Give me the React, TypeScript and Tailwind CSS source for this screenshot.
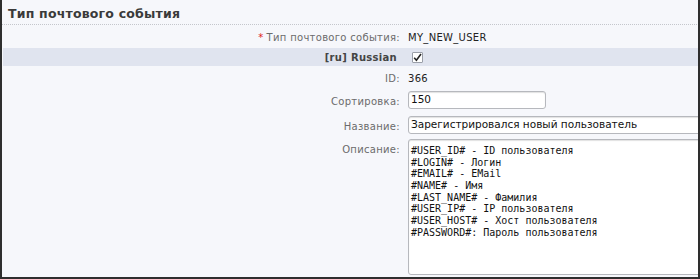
import React from "react";

const descLines = [
  "#USER_ID# - ID пользователя",
  "#LOGIN# - Логин",
  "#EMAIL# - EMail",
  "#NAME# - Имя",
  "#LAST_NAME# - Фамилия",
  "#USER_IP# - IP пользователя",
  "#USER_HOST# - Хост пользователя",
  "#PASSWORD#: Пароль пользователя",
];

function Label({ children }: { children: React.ReactNode }) {
  return (
    <div className="w-[399px] shrink-0 pr-[1px] text-right text-[10px] text-[#6b6b6b] tracking-[0.3px]">
      {children}
    </div>
  );
}

export default function App() {
  return (
    <div
      className="w-[700px] h-[279px] overflow-hidden bg-[#f6f7fb] border-l-2 border-r-2 border-b-2 border-[#2e2e2e]"
      style={{ fontFamily: '"DejaVu Sans", Verdana, sans-serif' }}
    >
      {/* Header */}
      <div className="h-[25px] pl-[6px] pt-[1px] mr-[1px] border-b border-dotted border-[#c4c6cc]">
        <span className="text-[12.5px] font-bold text-[#3a3a3a] tracking-[0.2px]">
          Тип почтового события
        </span>
      </div>

      {/* Event type */}
      <div className="h-[23px] flex items-center pt-[1px]">
        <Label>
          <span className="text-[#e02020] mr-[3px]">*</span>Тип почтового события:
        </Label>
        <div className="pl-[7px] text-[10px] text-[#222] tracking-[0.3px]">MY_NEW_USER</div>
      </div>

      {/* Language bar */}
      <div className="h-[18px] ml-px flex items-center bg-[#e0e4ef]">
        <div className="w-[394px] shrink-0 text-right text-[10px] font-bold text-[#444] tracking-[0.3px]">
          [ru] Russian
        </div>
        <div className="ml-[15px] w-[11px] h-[11px] border border-[#9a9ea8] bg-white rounded-[1px] flex items-center justify-center">
          <svg width="9" height="9" viewBox="0 0 9 9" fill="none">
            <path d="M1.2 4.8l2.2 2.4L8 1" stroke="#222" strokeWidth="1.6" />
          </svg>
        </div>
      </div>

      {/* ID */}
      <div className="h-[25px] flex items-center">
        <Label>ID:</Label>
        <div className="pl-[7px] text-[10px] text-[#222] tracking-[0.3px]">366</div>
      </div>

      {/* Sort */}
      <div className="h-[25px] flex items-start">
        <div className="pt-[3px]">
          <Label>Сортировка:</Label>
        </div>
        <div className="ml-[7px] w-[138px] h-[18px] bg-white border border-[#b6b8bd] rounded-[3px] shadow-[inset_0_1px_1px_rgba(0,0,0,0.12)] flex items-center pl-[2px] text-[10.5px] text-[#111]">
          150
        </div>
      </div>

      {/* Name */}
      <div className="h-[23px] flex items-start">
        <div className="pt-[3px]">
          <Label>Название:</Label>
        </div>
        <div className="ml-[7px] w-[320px] shrink-0 h-[18px] bg-white border border-[#b6b8bd] rounded-[3px] shadow-[inset_0_1px_1px_rgba(0,0,0,0.12)] flex items-center pl-[2px] text-[10.5px] text-[#111] whitespace-nowrap">
          Зарегистрировался новый пользователь
        </div>
      </div>

      {/* Description */}
      <div className="flex items-start">
        <div className="pt-[3px]">
          <Label>Описание:</Label>
        </div>
        <div
          className="ml-[7px] w-[320px] shrink-0 h-[136px] bg-white border border-[#b6b8bd] rounded-[3px] shadow-[inset_0_1px_1px_rgba(0,0,0,0.12)] pl-[2px] pt-[5px] text-[10px] leading-[11.67px] text-[#111] whitespace-pre"
          style={{ fontFamily: '"DejaVu Sans Mono", monospace' }}
        >
          {descLines.map((l) => (
            <div key={l}>{l}</div>
          ))}
        </div>
      </div>
    </div>
  );
}
